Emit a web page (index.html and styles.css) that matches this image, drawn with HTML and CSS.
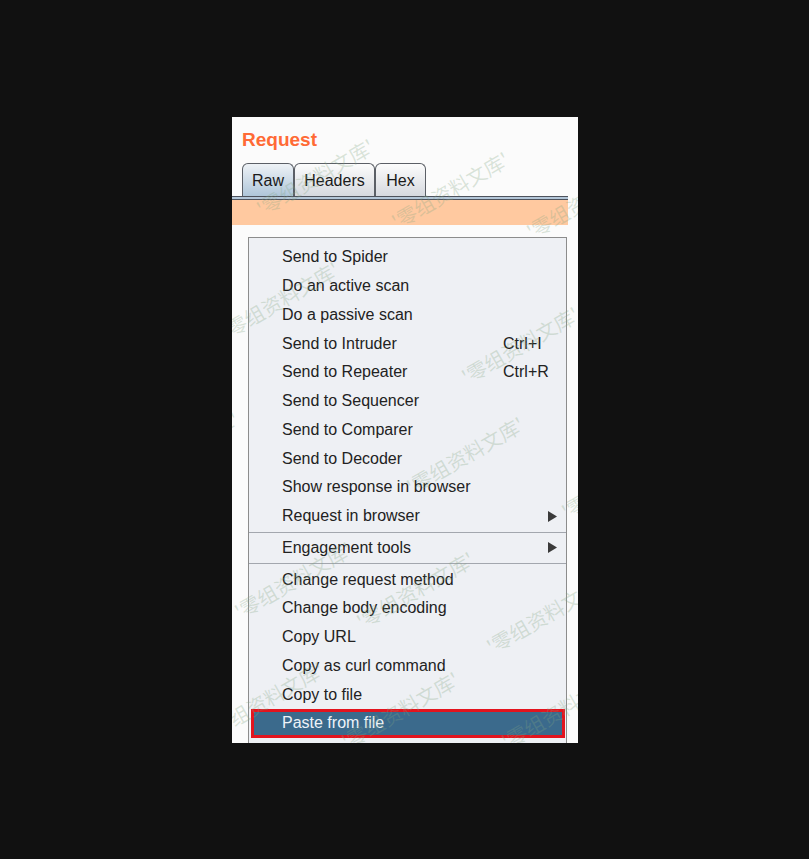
FILE: index.html
```html
<!DOCTYPE html>
<html lang="en">
<head>
<meta charset="utf-8">
<title>Request</title>
<link rel="stylesheet" href="styles.css">
</head>
<body>
<div class="panel">
  <div class="inner">
    <div class="title">Request</div>
    <div class="tabs">
      <div class="tab active">Raw</div>
      <div class="tab">Headers</div>
      <div class="tab">Hex</div>
    </div>
    <div class="tabline"></div>
    <div class="orange"></div>
  </div>
  <div class="menu">
    <div class="item"><span class="label">Send to Spider</span></div>
    <div class="item"><span class="label">Do an active scan</span></div>
    <div class="item"><span class="label">Do a passive scan</span></div>
    <div class="item"><span class="label">Send to Intruder</span><span class="key">Ctrl+I</span></div>
    <div class="item"><span class="label">Send to Repeater</span><span class="key">Ctrl+R</span></div>
    <div class="item"><span class="label">Send to Sequencer</span></div>
    <div class="item"><span class="label">Send to Comparer</span></div>
    <div class="item"><span class="label">Send to Decoder</span></div>
    <div class="item"><span class="label">Show response in browser</span></div>
    <div class="item"><span class="label">Request in browser</span><svg class="arrow" width="9" height="11" viewBox="0 0 9 11"><path d="M0 0 L9 5.5 L0 11 Z" fill="#3a3a3a"/></svg></div>
    <div class="sep"></div>
    <div class="item"><span class="label">Engagement tools</span><svg class="arrow" width="9" height="11" viewBox="0 0 9 11"><path d="M0 0 L9 5.5 L0 11 Z" fill="#3a3a3a"/></svg></div>
    <div class="sep"></div>
    <div class="item"><span class="label">Change request method</span></div>
    <div class="item"><span class="label">Change body encoding</span></div>
    <div class="item"><span class="label">Copy URL</span></div>
    <div class="item"><span class="label">Copy as curl command</span></div>
    <div class="item"><span class="label">Copy to file</span></div>
    <div class="item selected"><span class="label">Paste from file</span></div>
  </div>
  <div class="marks" aria-hidden="true">
    <span class="wm w1">'零组资料文库'</span>
    <span class="wm w2">'零组资料文库'</span>
    <span class="wm w3">'零组资料文库'</span>
    <span class="wm w4">'零组资料文库'</span>
    <span class="wm w5">'零组资料文库'</span>
    <span class="wm w6">'零组资料文库'</span>
    <span class="wm w7">'零组资料文库'</span>
    <span class="wm w8">'零组资料文库'</span>
    <span class="wm w9">'零组资料文库'</span>
    <span class="wm w10">'零组资料文库'</span>
    <span class="wm w11">'零组资料文库'</span>
    <span class="wm w12">'零组资料文库'</span>
    <span class="wm w13">'零组资料文库'</span>
    <span class="wm w14">'零组资料文库'</span>
  </div>
</div>
</body>
</html>
```
FILE: styles.css
```css
html, body {
  margin: 0;
  padding: 0;
  background: #111111;
}
body {
  padding: 117px 0 0 232px;
  height: 859px;
  box-sizing: border-box;
  font-family: "Liberation Sans", Arial, sans-serif;
}
.panel {
  position: relative;
  width: 346px;
  height: 626px;
  background: #fbfbfb;
  overflow: hidden;
}
.inner {
  width: 336px;
}
.title {
  padding: 12px 0 0 10px;
  height: 21px;
  line-height: 21px;
  font-size: 19px;
  font-weight: bold;
  color: #ff6a35;
  margin-bottom: 13px;
}
.tabs {
  display: flex;
  padding-left: 10px;
  height: 33px;
}
.tab {
  box-sizing: border-box;
  height: 33px;
  border: 1px solid #5b5f66;
  border-bottom: none;
  border-radius: 6px 6px 0 0;
  background: linear-gradient(#fcfcfc, #d6d9df);
  font-size: 16px;
  color: #1a1a1a;
  line-height: 33px;
  text-align: center;
}
.tab:nth-child(1) { width: 52px; }
.tab:nth-child(2) { width: 81px; }
.tab:nth-child(3) { width: 51px; }
.tab.active {
  background: linear-gradient(#eef2f6, #afc6d9);
}
.tabline {
  height: 2px;
  border-top: 1px solid #4d525c;
  border-bottom: 1px solid #4d525c;
  background: #b3c6d8;
}
.orange {
  height: 25px;
  background: #ffc9a0;
}
.menu {
  margin: 12px 0 0 16px;
  width: 319px;
  box-sizing: border-box;
  border: 1px solid #8c8c8c;
  background: #eef0f4;
  padding: 5px 0 20px;
}
.item {
  display: flex;
  align-items: center;
  height: 28.75px;
  box-sizing: border-box;
  padding-left: 33px;
  font-size: 16px;
  color: #222222;
  white-space: nowrap;
}
.label {
  width: 221px;
  flex-shrink: 0;
}
.key {
  flex: 1;
}
.arrow {
  margin-left: auto;
  margin-right: 9px;
}
.sep {
  height: 1px;
  margin: 1px 0;
  background: #a3a7ae;
}
.item.selected {
  margin: 0 1px 0 2px;
  padding-left: 28px;
  border: 3px solid #e3141e;
  background: #3b6a8c;
  color: #eef3f8;
}
.marks {
  position: absolute;
  inset: 0;
  pointer-events: none;
}
.wm {
  position: absolute;
  font-family: "Noto Sans CJK SC", sans-serif;
  font-size: 20px;
  white-space: nowrap;
  color: rgba(130, 165, 130, 0.28);
  transform: translate(-50%, -50%) rotate(-30deg);
}
.w1 { left: 83px; top: 60px; }
.w2 { left: 218px; top: 73px; }
.w3 { left: 353px; top: 83px; }
.w4 { left: 48px; top: 183px; }
.w5 { left: 288px; top: 228px; }
.w6 { left: -52px; top: 333px; }
.w7 { left: 233px; top: 338px; }
.w8 { left: 388px; top: 363px; }
.w9 { left: 61px; top: 463px; }
.w10 { left: 183px; top: 473px; }
.w11 { left: 313px; top: 498px; }
.w12 { left: 33px; top: 583px; }
.w13 { left: 168px; top: 593px; }
.w14 { left: 328px; top: 593px; }
```
